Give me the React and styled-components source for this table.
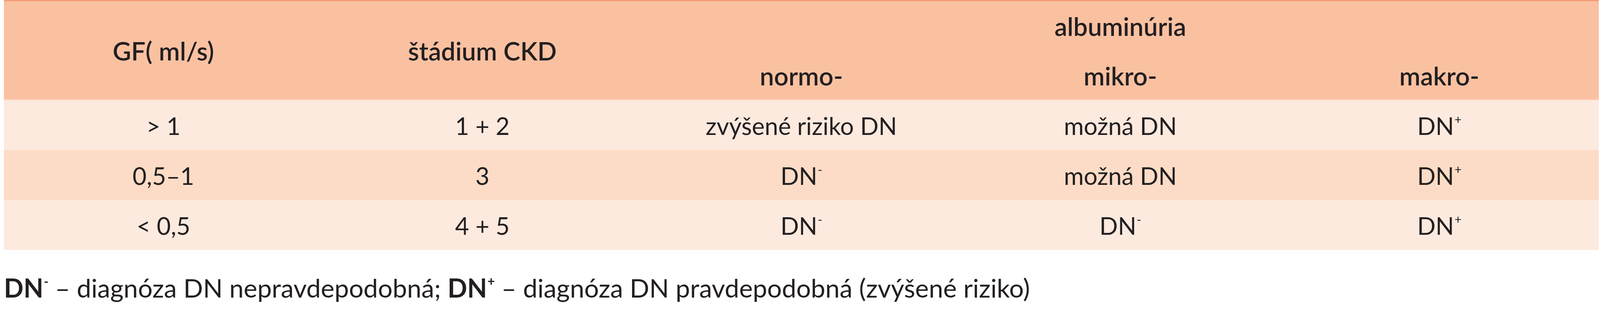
import React from 'react'
import styled, { createGlobalStyle } from 'styled-components'

const GlobalStyle = createGlobalStyle`
  *, *::before, *::after {
    box-sizing: border-box;
  }
  html, body {
    margin: 0;
    padding: 0;
    background: #ffffff;
  }
  body {
    font-family: Lato, "Open Sans", "Liberation Sans", sans-serif;
    color: #231f20;
  }
`

const Page = styled.div`
  width: 100%;
  padding: 0 3px 0 10px;
`

const Table = styled.div`
  display: grid;
  grid-template-columns: repeat(5, minmax(0, 1fr));
  width: 100%;
  border-top: 3px solid #f49a77;
`

const HeadCell = styled.div`
  display: flex;
  align-items: center;
  justify-content: center;
  height: ${props => props.$tall ? 254 : 127}px;
  grid-row: ${props => props.$tall ? 'span 2' : 'auto'};
  grid-column: ${props => props.$span ? `span ${props.$span}` : 'auto'};
  background: #fac1a1;
  font-size: 65px;
  font-weight: 600;
  box-shadow: ${props => props.$last ? 'inset 0 -3px 0 #fcd2ba' : 'none'};
`

const Cell = styled.div`
  display: flex;
  align-items: center;
  justify-content: center;
  height: 128px;
  padding-top: 2px;
  background: ${props => props.$alt ? '#fcdcc6' : '#fdeadf'};
  font-size: 62px;
`

const Sup = styled.span`
  font-size: 0.5em;
  line-height: 1;
  vertical-align: 0.9em;
  margin-left: 1px;
`

const Note = styled.p`
  margin: 57px 0 0;
  font-size: 66px;
`

const Strong = styled.b`
  font-weight: 700;
`

const DnMinus = () => <span>DN<Sup>-</Sup></span>
const DnPlus = () => <span>DN<Sup>+</Sup></span>

const rows = [
  ['> 1', '1 + 2', 'zvýšené riziko DN', 'možná DN', <DnPlus />],
  ['0,5–1', '3', <DnMinus />, 'možná DN', <DnPlus />],
  ['< 0,5', '4 + 5', <DnMinus />, <DnMinus />, <DnPlus />],
]

export default function App() {
  return (
    <Page>
      <GlobalStyle />
      <Table>
        <HeadCell $tall $last>GF( ml/s)</HeadCell>
        <HeadCell $tall $last>štádium CKD</HeadCell>
        <HeadCell $span={3}>albuminúria</HeadCell>
        <HeadCell $last>normo-</HeadCell>
        <HeadCell $last>mikro-</HeadCell>
        <HeadCell $last>makro-</HeadCell>
        {rows.map((row, i) =>
          row.map((value, j) => (
            <Cell key={`${i}-${j}`} $alt={i === 1}>{value}</Cell>
          ))
        )}
      </Table>
      <Note>
        <Strong><DnMinus /></Strong> – diagnóza DN nepravdepodobná; <Strong><DnPlus /></Strong> – diagnóza DN pravdepodobná (zvýšené riziko)
      </Note>
    </Page>
  )
}
